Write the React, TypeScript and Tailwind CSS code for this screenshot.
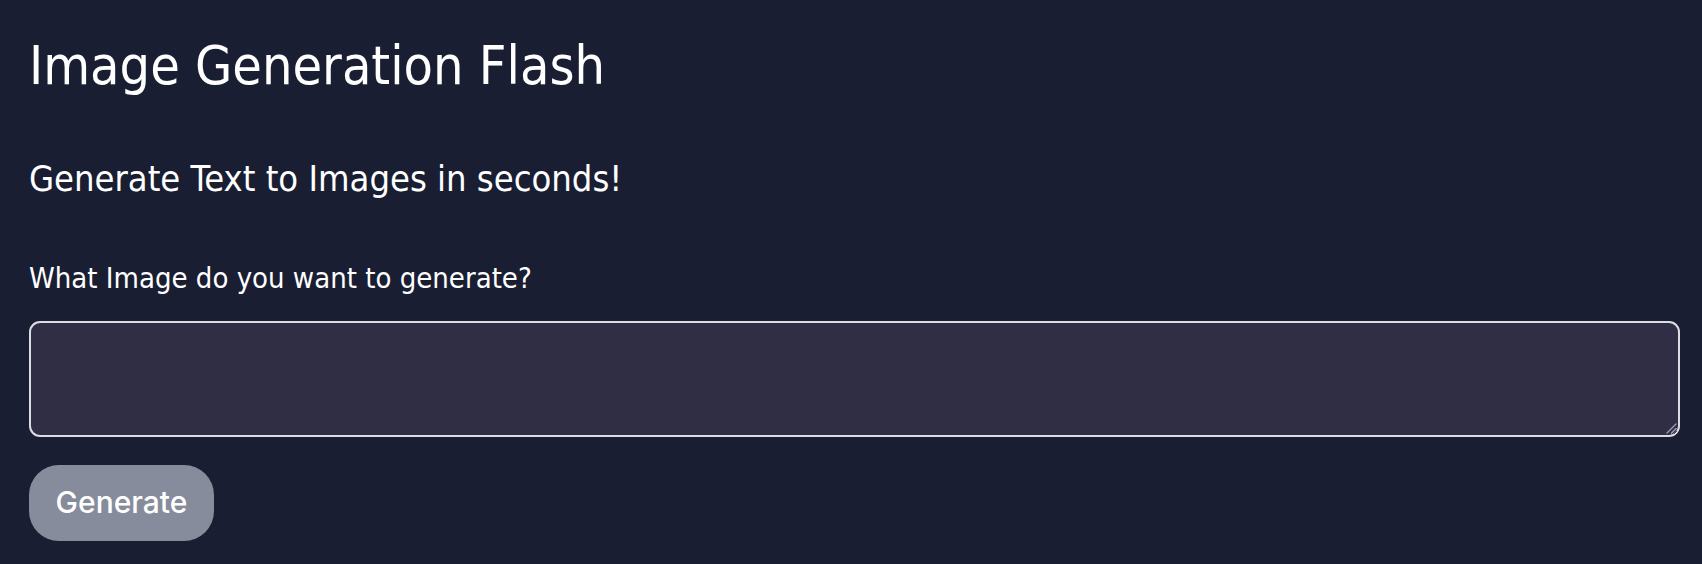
export default function App() {
  const heading = "font-['DejaVu_Sans_Condensed','DejaVu_Sans',sans-serif] font-stretch-condensed font-normal text-white leading-none";
  return (
    <div className="min-h-[564px] w-full bg-[#191e32] pl-[29px] pr-[22px]">
      <div className="flex flex-col pt-[39px]">
        <h1 className={`${heading} text-[53.5px]`}>Image Generation Flash</h1>
        <h2 className={`${heading} mt-[68px] text-[36px]`}>Generate Text to Images in seconds!</h2>
        <label htmlFor="prompt" className={`${heading} mt-[67px] text-[29px]`}>
          What Image do you want to generate?
        </label>
        <div className="relative mt-[28px]">
          <textarea
            id="prompt"
            className="block h-[116px] w-full rounded-[11px] border-2 border-[#dcdde4] bg-[#2f2e45] p-3 text-white outline-none [color-scheme:dark]"
          />
          {/* resize grip */}
          <svg className="pointer-events-none absolute bottom-[3px] right-[3px]" width="12" height="12" viewBox="0 0 12 12">
            <path d="M11 2 L2 11 M11 6.5 L6.5 11" stroke="#9a9aa8" strokeWidth="1.4" strokeLinecap="round" />
          </svg>
        </div>
        <button className="mt-[28px] h-[76px] w-[185px] rounded-[30px] bg-[#868c9b] font-['Inter',sans-serif] text-[30px] font-medium text-white">
          Generate
        </button>
      </div>
    </div>
  );
}
